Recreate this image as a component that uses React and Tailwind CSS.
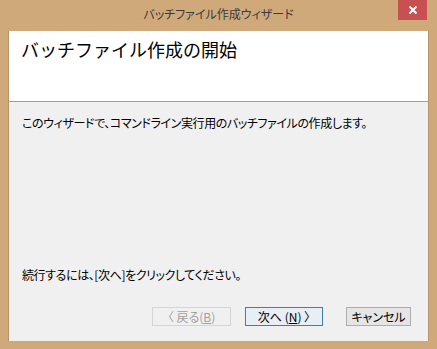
export default function App() {
  const jp = { fontFamily: '"Noto Sans CJK JP", "Noto Sans", sans-serif' };
  return (
    <div className="w-[437px] h-[349px] bg-[#d0a97b] flex flex-col" style={jp}>
      <div className="h-[31px] relative flex items-center justify-center">
        <span className="text-[12px] text-[#3a3a3a] -mt-[3px] [font-feature-settings:'palt']">バッチファイル作成ウィザード</span>
        <div className="absolute right-[10px] top-0 w-[29px] h-[20px] bg-[#c75050] flex items-center justify-center">
          <svg width="10" height="10" viewBox="0 0 10 10">
            <path d="M1.5 1.5 L8.5 8.5 M8.5 1.5 L1.5 8.5" stroke="#fff" strokeWidth="2" />
          </svg>
        </div>
      </div>
      <div className="mx-[8px] h-[310px] flex flex-col bg-[#f0f0f0] border-l border-r border-[#b8946a]">
        <div className="h-[71px] bg-white border-b border-[#a0a0a0] pl-[12px] pt-[6px]">
          <div className="text-[18px] text-black leading-[24px]">バッチファイル作成の開始</div>
        </div>
        <div className="pl-[13px] pt-[13px] text-[12px] text-black leading-[16px] tracking-[-0.4px] [font-feature-settings:'palt']">
          このウィザードで、コマンドライン実行用のバッチファイルの作成します。
        </div>
        <div className="flex-1" />
        <div className="pl-[13px] text-[12px] text-black leading-[16px] tracking-[-0.4px] [font-feature-settings:'palt']">
          続行するには、[次へ]をクリックしてください。
        </div>
        <div className="flex justify-end pr-[17px] pt-[24px] pb-[15px] [font-feature-settings:'palt']">
          <div className="w-[79px] h-[19px] border border-[#d5d5d5] bg-[#f0f0f0] text-[#a0a0a0] text-[12px] flex items-center justify-center leading-none">
            〈 戻る(<span className="underline">B</span>)
          </div>
          <div className="ml-[14px] w-[78px] h-[19px] border border-[#3c7fb1] bg-[#e8eef5] text-black text-[12px] flex items-center justify-center leading-none">
            次へ (<span className="underline">N</span>) 〉
          </div>
          <div className="ml-[23px] w-[65px] h-[19px] border border-[#adadad] bg-[#e5e5e5] text-black text-[12px] flex items-center justify-center leading-none">
            キャンセル
          </div>
        </div>
      </div>
      <div className="flex-1" />
    </div>
  );
}
